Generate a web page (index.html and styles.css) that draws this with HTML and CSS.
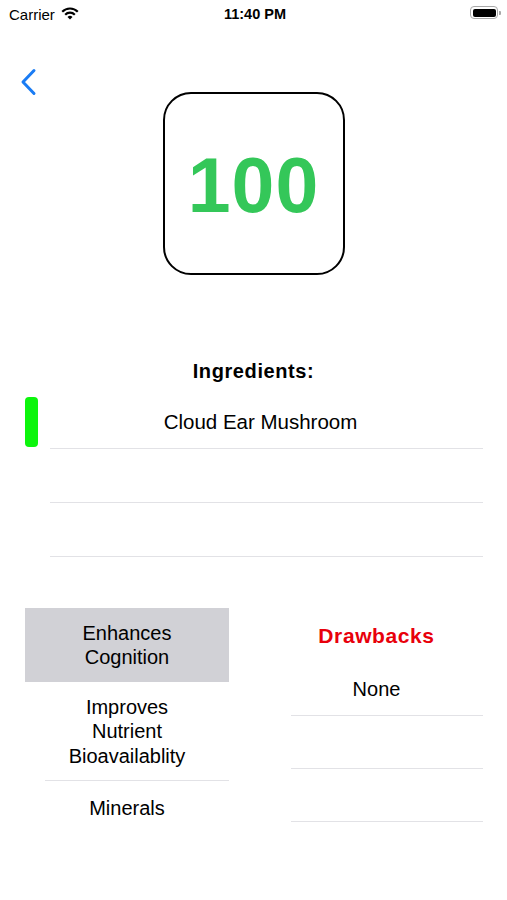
FILE: index.html
```html
<!DOCTYPE html>
<html lang="en">
<head>
<meta charset="utf-8">
<title>Score</title>
<link rel="stylesheet" href="styles.css">
</head>
<body>
<div class="screen">
  <div class="status">
    <div class="status-left">
      <span class="carrier">Carrier</span>
      <svg class="wifi" viewBox="0 0 18 13" aria-hidden="true">
        <path d="M1.22 4.72 A11 11 0 0 1 16.78 4.72" fill="none" stroke="#000" stroke-width="2.2"/>
        <path d="M4.19 7.69 A6.8 6.8 0 0 1 13.81 7.69" fill="none" stroke="#000" stroke-width="2.2"/>
        <path d="M9 12.6 L6.53 10.03 A3.5 3.5 0 0 1 11.47 10.03 Z" fill="#000"/>
      </svg>
    </div>
    <div class="time">11:40 PM</div>
    <div class="status-right">
      <span class="battery"><span class="battery-level"></span></span>
      <span class="battery-nub"></span>
    </div>
  </div>

  <div class="hero">
    <button class="back" type="button" aria-label="Back">
      <svg viewBox="0 0 17 28" width="17" height="28" aria-hidden="true">
        <polyline points="14,2.5 3,14 14,25.5" fill="none" stroke="#1a7cf4" stroke-width="3" stroke-linecap="round" stroke-linejoin="round"/>
      </svg>
    </button>
    <div class="score-box"><span class="score">100</span></div>
    <div class="hero-spacer"></div>
  </div>

  <h2 class="section-title">Ingredients:</h2>
  <div class="ing-list">
    <div class="ing-row"><span class="indicator"></span><div class="ing-cell">Cloud Ear Mushroom</div></div>
    <div class="ing-row"><span></span><div class="ing-cell"></div></div>
    <div class="ing-row"><span></span><div class="ing-cell"></div></div>
  </div>

  <div class="lists">
    <div class="benefits">
      <div class="benefit selected">Enhances Cognition</div>
      <div class="benefit sep">Improves Nutrient Bioavailablity</div>
      <div class="benefit">Minerals</div>
    </div>
    <div class="drawbacks">
      <div class="drawbacks-title">Drawbacks</div>
      <div class="drawback">None</div>
      <div class="drawback"></div>
      <div class="drawback"></div>
    </div>
  </div>
</div>
</body>
</html>
```

FILE: styles.css
```css
* { box-sizing: border-box; }

body {
  margin: 0;
  font-family: "Liberation Sans", Arial, sans-serif;
  color: #000;
  background: #fff;
}

.screen {
  width: 507px;
  height: 900px;
  overflow: hidden;
}

/* status bar */
.status {
  height: 28px;
  display: grid;
  grid-template-columns: 1fr auto 1fr;
  align-items: center;
  padding: 0 6px 0 9px;
}
.status-left {
  display: flex;
  align-items: center;
  gap: 6px;
  font-size: 15px;
}
.wifi {
  width: 18px;
  height: 13px;
  margin-top: -1px;
}
.time {
  font-size: 14.5px;
  font-weight: bold;
}
.status-right {
  display: flex;
  justify-content: flex-end;
  align-items: center;
  margin-bottom: 3px;
}
.battery {
  width: 28px;
  height: 13px;
  border: 1px solid #a8a8a8;
  border-radius: 4px;
  padding: 1.5px;
  display: flex;
}
.battery-level {
  flex: 1;
  background: #000;
  border-radius: 2px;
}
.battery-nub {
  width: 2px;
  height: 4px;
  margin-left: 1px;
  background: #a8a8a8;
  border-radius: 0 1px 1px 0;
}

/* hero */
.hero {
  display: grid;
  grid-template-columns: 1fr auto 1fr;
  align-items: start;
  padding-top: 40px;
}
.back {
  justify-self: start;
  margin-left: 20px;
  width: 17px;
  height: 28px;
  padding: 0;
  border: 0;
  background: none;
  display: block;
}
.back svg { display: block; }
.score-box {
  margin-top: 24px;
  width: 182px;
  height: 183px;
  border: 2.5px solid #000;
  border-radius: 28px;
  display: flex;
  align-items: center;
  justify-content: center;
}
.score {
  font-size: 77px;
  line-height: 1;
  font-weight: bold;
  color: #34c759;
  letter-spacing: 1px;
  padding-top: 4px;
}

/* ingredients */
.section-title {
  margin: 84px 0 0;
  font-size: 20px;
  line-height: 24px;
  font-weight: bold;
  text-align: center;
  letter-spacing: 0.6px;
}
.ing-list {
  margin-top: 12px;
  padding: 0 24px 0 25px;
}
.ing-row {
  display: grid;
  grid-template-columns: 13px 1fr;
  align-items: center;
  height: 54px;
}
.indicator {
  height: 50px;
  background: #0cf50c;
  border-radius: 4px;
}
.ing-cell {
  height: 100%;
  display: flex;
  align-items: center;
  justify-content: center;
  font-size: 20.5px;
  background: linear-gradient(#e2e2e6, #e2e2e6) no-repeat 12px 100% / calc(100% - 12px) 1px;
}

/* bottom lists */
.lists {
  margin-top: 51px;
  display: grid;
  grid-template-columns: 204px 213px;
  column-gap: 41px;
  align-items: start;
  padding: 0 24px 0 25px;
}
.benefit {
  min-height: 56px;
  padding: 12.5px 30px;
  display: flex;
  align-items: center;
  justify-content: center;
  text-align: center;
  font-size: 20px;
  line-height: 24.5px;
}
.benefit.selected {
  background: #d1d1d6;
}
.benefit.sep {
  background: linear-gradient(#e2e2e6, #e2e2e6) no-repeat 20px 100% / calc(100% - 20px) 1px;
}
.drawbacks-title {
  height: 55px;
  display: flex;
  align-items: center;
  justify-content: center;
  font-size: 21px;
  font-weight: bold;
  color: #e8000b;
  letter-spacing: 0.6px;
}
.drawback {
  height: 53px;
  display: flex;
  align-items: center;
  justify-content: center;
  font-size: 20px;
  background: linear-gradient(#e2e2e6, #e2e2e6) no-repeat 21px 100% / calc(100% - 21px) 1px;
}
```
